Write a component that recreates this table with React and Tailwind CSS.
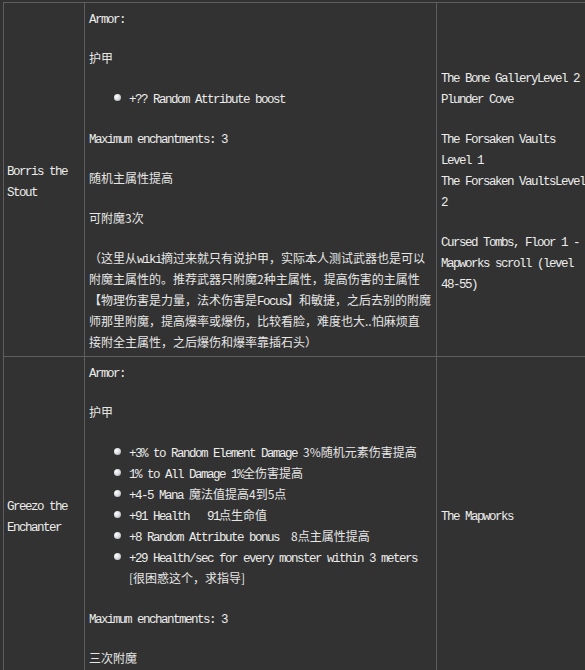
import React from "react";

const E = ({ children }) => (
  <span className="whitespace-pre font-['Liberation_Mono',monospace] text-[12.5px] tracking-[-1.5px] text-[#ececec]">
    {children}
  </span>
);

const Bullet = () => (
  <span className="mt-[7px] h-[7px] w-[7px] shrink-0 rounded-full bg-[radial-gradient(circle_at_35%_35%,#ffffff,#d4d7dd_55%,#8c9099)]" />
);

const Li = ({ children }) => (
  <div className="flex items-start pl-[25px]">
    <Bullet />
    <div className="ml-[8px]">{children}</div>
  </div>
);

const P = ({ children, last }) => (
  <div className={last ? "" : "mb-[19px]"}>{children}</div>
);

const Line = ({ children }) => (
  <div className="h-[21px] whitespace-nowrap">{children}</div>
);

export default function App() {
  return (
    <div className="h-[670px] w-[585px] overflow-hidden bg-[#323232] pl-[3px] pt-[2px] font-['Noto_Sans_CJK_SC',sans-serif] text-[12px] leading-[21px] text-[#e6e6e6]">
      <div className="grid w-[592px] grid-cols-[81px_352px_158px] border-l border-t border-[#5e5e5e]">
        {/* Row 1 */}
        <div className="flex items-center border-b border-r border-[#5e5e5e] pl-[3px]">
          <div>
            <Line><E>Borris the</E></Line>
            <Line><E>Stout</E></Line>
          </div>
        </div>
        <div className="border-b border-r border-[#5e5e5e] px-[4px] pb-[4px] pt-[4px]">
          <P><Line><E>Armor:</E></Line></P>
          <P><Line>护甲</Line></P>
          <P>
            <Li><Line><E>+?? Random Attribute boost</E></Line></Li>
          </P>
          <P><Line><E>Maximum enchantments: 3</E></Line></P>
          <P><Line>随机主属性提高</Line></P>
          <P><Line>可附魔3次</Line></P>
          <P last>
            <Line>（这里从<E>wiki</E>摘过来就只有说护甲，实际本人测试武器也是可以</Line>
            <Line>附魔主属性的。推荐武器只附魔2种主属性，提高伤害的主属性</Line>
            <Line>【物理伤害是力量，法术伤害是<E>Focus</E>】和敏捷，之后去别的附魔</Line>
            <Line>师那里附魔，提高爆率或爆伤，比较看脸，难度也大..怕麻烦直</Line>
            <Line>接附全主属性，之后爆伤和爆率靠插石头）</Line>
          </P>
        </div>
        <div className="flex items-center border-b border-r border-[#5e5e5e] pl-[4px]">
          <div>
            <P>
              <Line><E>The Bone GalleryLevel 2</E></Line>
              <Line><E>Plunder Cove</E></Line>
            </P>
            <P>
              <Line><E>The Forsaken Vaults</E></Line>
              <Line><E>Level 1</E></Line>
              <Line><E>The Forsaken VaultsLevel</E></Line>
              <Line><E>2</E></Line>
            </P>
            <P last>
              <Line><E>Cursed Tombs, Floor 1 -</E></Line>
              <Line><E>Mapworks scroll (level</E></Line>
              <Line><E>48-55)</E></Line>
            </P>
          </div>
        </div>

        {/* Row 2 */}
        <div className="flex items-center border-b border-r border-[#5e5e5e] pl-[3px]">
          <div>
            <Line><E>Greezo the</E></Line>
            <Line><E>Enchanter</E></Line>
          </div>
        </div>
        <div className="border-b border-r border-[#5e5e5e] px-[4px] pb-[4px] pt-[4px]">
          <P><Line><E>Armor:</E></Line></P>
          <P><Line>护甲</Line></P>
          <P>
            <Li><Line><E>+3% to Random Element Damage </E>3%随机元素伤害提高</Line></Li>
            <Li><Line><E>1% to All Damage 1%</E>全伤害提高</Line></Li>
            <Li><Line><E>+4-5 Mana </E>魔法值提高4到5点</Line></Li>
            <Li><Line><E>+91 Health   91</E>点生命值</Line></Li>
            <Li><Line><E>+8 Random Attribute bonus  </E>8点主属性提高</Line></Li>
            <Li>
              <Line><E>+29 Health/sec for every monster within 3 meters</E></Line>
              <Line>[很困惑这个，求指导]</Line>
            </Li>
          </P>
          <P><Line><E>Maximum enchantments: 3</E></Line></P>
          <P last><Line>三次附魔</Line></P>
        </div>
        <div className="flex items-center border-b border-r border-[#5e5e5e] pl-[4px]">
          <Line><E>The Mapworks</E></Line>
        </div>
      </div>
    </div>
  );
}
